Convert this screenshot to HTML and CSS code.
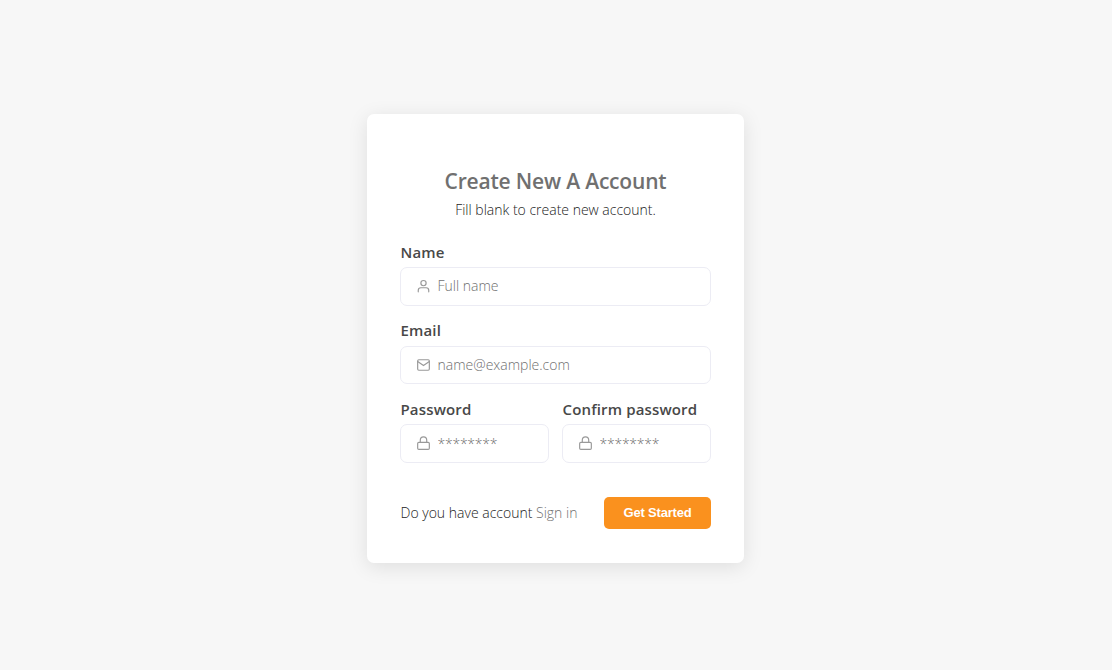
FILE: index.html
```html
<!DOCTYPE html>
<html lang="en">
<head>
<meta charset="utf-8">
<title>Create New A Account</title>
<link rel="stylesheet" href="styles.css">
</head>
<body>
<main class="card">
  <header class="head">
    <h1 class="title">Create New A Account</h1>
    <p class="subtitle">Fill blank to create new account.</p>
  </header>
  <form class="form">
    <div class="field">
      <label class="label" for="name">Name</label>
      <div class="control">
        <svg class="icon" viewBox="0 0 24 24"><path d="M21 22v-2.500a4.500 4.500 0 0 0-4.500-4.500h-9A4.500 4.500 0 0 0 3 19.500V22"/><circle cx="12" cy="7" r="4.500"/></svg>
        <input class="input" id="name" type="text" placeholder="Full name">
      </div>
    </div>
    <div class="field field-email">
      <label class="label" for="email">Email</label>
      <div class="control">
        <svg class="icon" viewBox="0 0 24 24"><path d="M4 3h16a2 2 0 0 1 2 2v14a2 2 0 0 1-2 2H4a2 2 0 0 1-2-2V5a2 2 0 0 1 2-2z"/><path d="m22 6-10 7L2 6"/></svg>
        <input class="input" id="email" type="text" placeholder="name@example.com">
      </div>
    </div>
    <div class="row">
      <div class="field">
        <label class="label" for="password">Password</label>
        <div class="control">
          <svg class="icon" viewBox="0 0 24 24"><rect x="2" y="11" width="20" height="12" rx="2"/><path d="M6.500 11V7a5.500 5.500 0 0 1 11 0v4"/></svg>
          <input class="input input-secret" id="password" type="password" placeholder="********">
        </div>
      </div>
      <div class="field">
        <label class="label" for="confirm">Confirm password</label>
        <div class="control">
          <svg class="icon" viewBox="0 0 24 24"><rect x="2" y="11" width="20" height="12" rx="2"/><path d="M6.500 11V7a5.500 5.500 0 0 1 11 0v4"/></svg>
          <input class="input input-secret" id="confirm" type="password" placeholder="********">
        </div>
      </div>
    </div>
    <div class="actions">
      <p class="signin">Do you have account <a class="link" href="#">Sign in</a></p>
      <button class="button" type="button">Get Started</button>
    </div>
  </form>
</main>
</body>
</html>
```

FILE: styles.css
```css
* { box-sizing: border-box; }
body {
  margin: 0;
  height: 670px;
  padding-top: 114px;
  background: #f7f7f7;
  color: #222;
  font: 300 14px/20px "Open Sans", sans-serif;
}
.card {
  width: 377px;
  height: 449px;
  margin: 0 auto 0 367px;
  padding: 52px 33px 0;
  background: #fff;
  border-radius: 7px;
  box-shadow: 0 4px 20px rgba(0, 0, 0, 0.1);
}
.head { text-align: center; }
.title {
  margin: 0;
  font-size: 21px;
  line-height: 30px;
  font-weight: 600;
  letter-spacing: -0.18px;
  color: #707070;
}
.subtitle { margin: 4px 0 22px; }
.field { height: 78px; }
.label {
  display: block;
  height: 25px;
  padding-left: 0.5px;
  color: #484848;
  font-size: 15px;
  line-height: 20px;
  font-weight: 600;
  letter-spacing: 0.15px;
}
.control {
  display: flex;
  align-items: center;
  height: 39px;
  padding-left: 15px;
  border: 1px solid #ececf4;
  border-radius: 7px;
}
.field-email { height: 79px; }
.field-email .label { height: 26px; }
.field-email .control { height: 38px; }
.icon {
  flex: none;
  width: 15px;
  height: 14px;
  margin-top: -1px;
  fill: none;
  stroke: #999;
  stroke-width: 2;
  stroke-linecap: round;
  stroke-linejoin: round;
}
.input {
  flex: 1;
  min-width: 0;
  margin-top: -1px;
  padding: 0 0 0 6.5px;
  border: 0;
  outline: 0;
  background: none;
  color: #444;
  font: inherit;
}
.field-email .icon,
.field-email .input { margin-top: 0; }
.input::placeholder { color: #707070; opacity: 1; }
.input-secret { margin-top: 0; letter-spacing: -0.25px; }
.row {
  display: grid;
  grid-template-columns: minmax(0, 1fr) minmax(0, 1fr);
  gap: 13px;
}
.actions {
  display: flex;
  justify-content: space-between;
  align-items: center;
  margin-top: 20px;
}
.signin { margin: 0; padding-left: 0.5px; }
.link { color: #707070; text-decoration: none; }
.button {
  width: 107px;
  height: 32px;
  padding: 0 0 2px;
  border: 0;
  border-radius: 5px;
  background: #fa911e;
  color: #fff;
  font: 700 13px "Liberation Sans", Arial, sans-serif;
  letter-spacing: -0.2px;
}
```
